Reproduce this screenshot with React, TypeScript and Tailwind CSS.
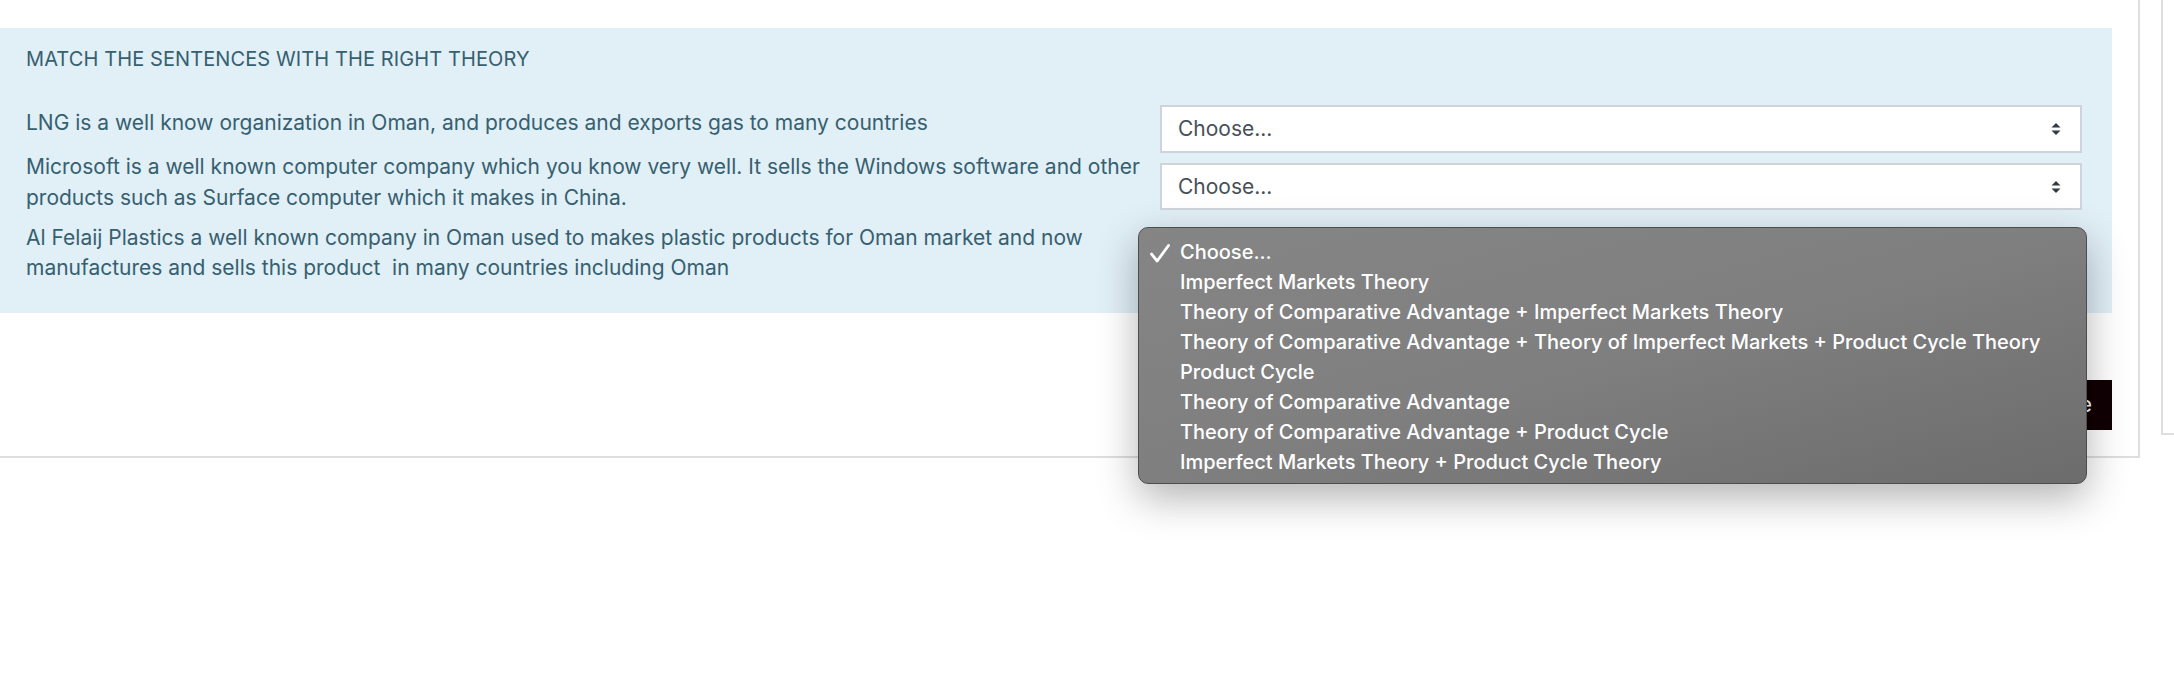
import React from "react";

const questions = [
  "LNG is a well know organization in Oman, and produces and exports gas to many countries",
  "Microsoft is a well known computer company which you know very well. It sells the Windows software and other products such as Surface computer which it makes in China.",
  "Al Felaij Plastics a well known company in Oman used to makes plastic products for Oman market and now manufactures and sells this product \u00a0in many countries including Oman",
];

const options = [
  "Choose...",
  "Imperfect Markets Theory",
  "Theory of Comparative Advantage + Imperfect Markets Theory",
  "Theory of Comparative Advantage + Theory of Imperfect Markets + Product Cycle Theory",
  "Product Cycle",
  "Theory of Comparative Advantage",
  "Theory of Comparative Advantage + Product Cycle",
  "Imperfect Markets Theory + Product Cycle Theory",
];

const SelectArrows = () => (
  <svg width="10" height="12" viewBox="0 0 10 12" className="shrink-0">
    <path d="M5 0 L9.5 4.5 L0.5 4.5 Z" fill="#343a40" />
    <path d="M5 12 L9.5 7.5 L0.5 7.5 Z" fill="#343a40" />
  </svg>
);

const FakeSelect: React.FC<{ className?: string }> = ({ className = "" }) => (
  <div
    className={`flex items-center justify-between bg-white border-2 border-[#ced4da] pl-[16px] pr-[19px] text-[21px] text-[#495057] ${className}`}
  >
    <span>Choose...</span>
    <SelectArrows />
  </div>
);

const App: React.FC = () => {
  return (
    <div className="relative flex h-[690px] w-[2174px] overflow-hidden bg-white font-['Inter','Noto_Sans',sans-serif]">
      {/* main card */}
      <div className="h-[458px] w-[2140px] shrink-0 border-r-2 border-b-2 border-[#dedede] pt-[28px] pr-[26px]">
        <div className="h-[285px] bg-[#e1eff7] pl-[26px] pr-[30px] pt-[19px] text-[#36606f]">
          <div className="text-[20px] leading-[24px] tracking-[0.1px]">
            MATCH THE SENTENCES WITH THE RIGHT THEORY
          </div>

          <div className="mt-[34px] flex justify-between">
            <div className="w-[1128px] text-[21px] leading-[30px]">
              <p className="mt-[3px]">{questions[0]}</p>
              <p className="mt-[14px] leading-[30.5px]">{questions[1]}</p>
              <p className="mt-[10px] leading-[29.5px]">{questions[2]}</p>
            </div>
            <div className="w-[922px]">
              <FakeSelect className="h-[48px]" />
              <FakeSelect className="mt-[10px] h-[47px]" />
              <FakeSelect className="mt-[19px] h-[47px]" />
            </div>
          </div>
        </div>

        <div className="mt-[67px] flex justify-end">
          <button className="h-[50px] bg-[#100004] px-[20px] text-[21px] text-white">
            Next page
          </button>
        </div>
      </div>

      {/* sidebar block */}
      <div className="ml-[21px] h-[435px] flex-1 border-l-2 border-b-2 border-[#dedede]" />

      {/* open native select menu */}
      <div className="absolute left-[1138px] top-[227px] h-[257px] w-[949px] rounded-[10px] border border-[#4d4d4d] bg-linear-to-br from-[#858585] via-[#7f7f7f] to-[#6d6c6d] pt-[9px] shadow-[0_14px_40px_rgba(0,0,0,0.3)]">
        {options.map((opt, i) => (
          <div
            key={opt}
            className="relative pl-[41px] text-[20px] font-medium leading-[30px] text-white"
          >
            {i === 0 && (
              <svg
                width="20"
                height="19"
                viewBox="0 0 20 19"
                className="absolute left-[11px] top-[7px]"
              >
                <path
                  d="M1.5 10 L7.2 17 L18.5 1.5"
                  fill="none"
                  stroke="white"
                  strokeWidth="2.8"
                  strokeLinecap="round"
                  strokeLinejoin="round"
                />
              </svg>
            )}
            {opt}
          </div>
        ))}
      </div>
    </div>
  );
};

export default App;
